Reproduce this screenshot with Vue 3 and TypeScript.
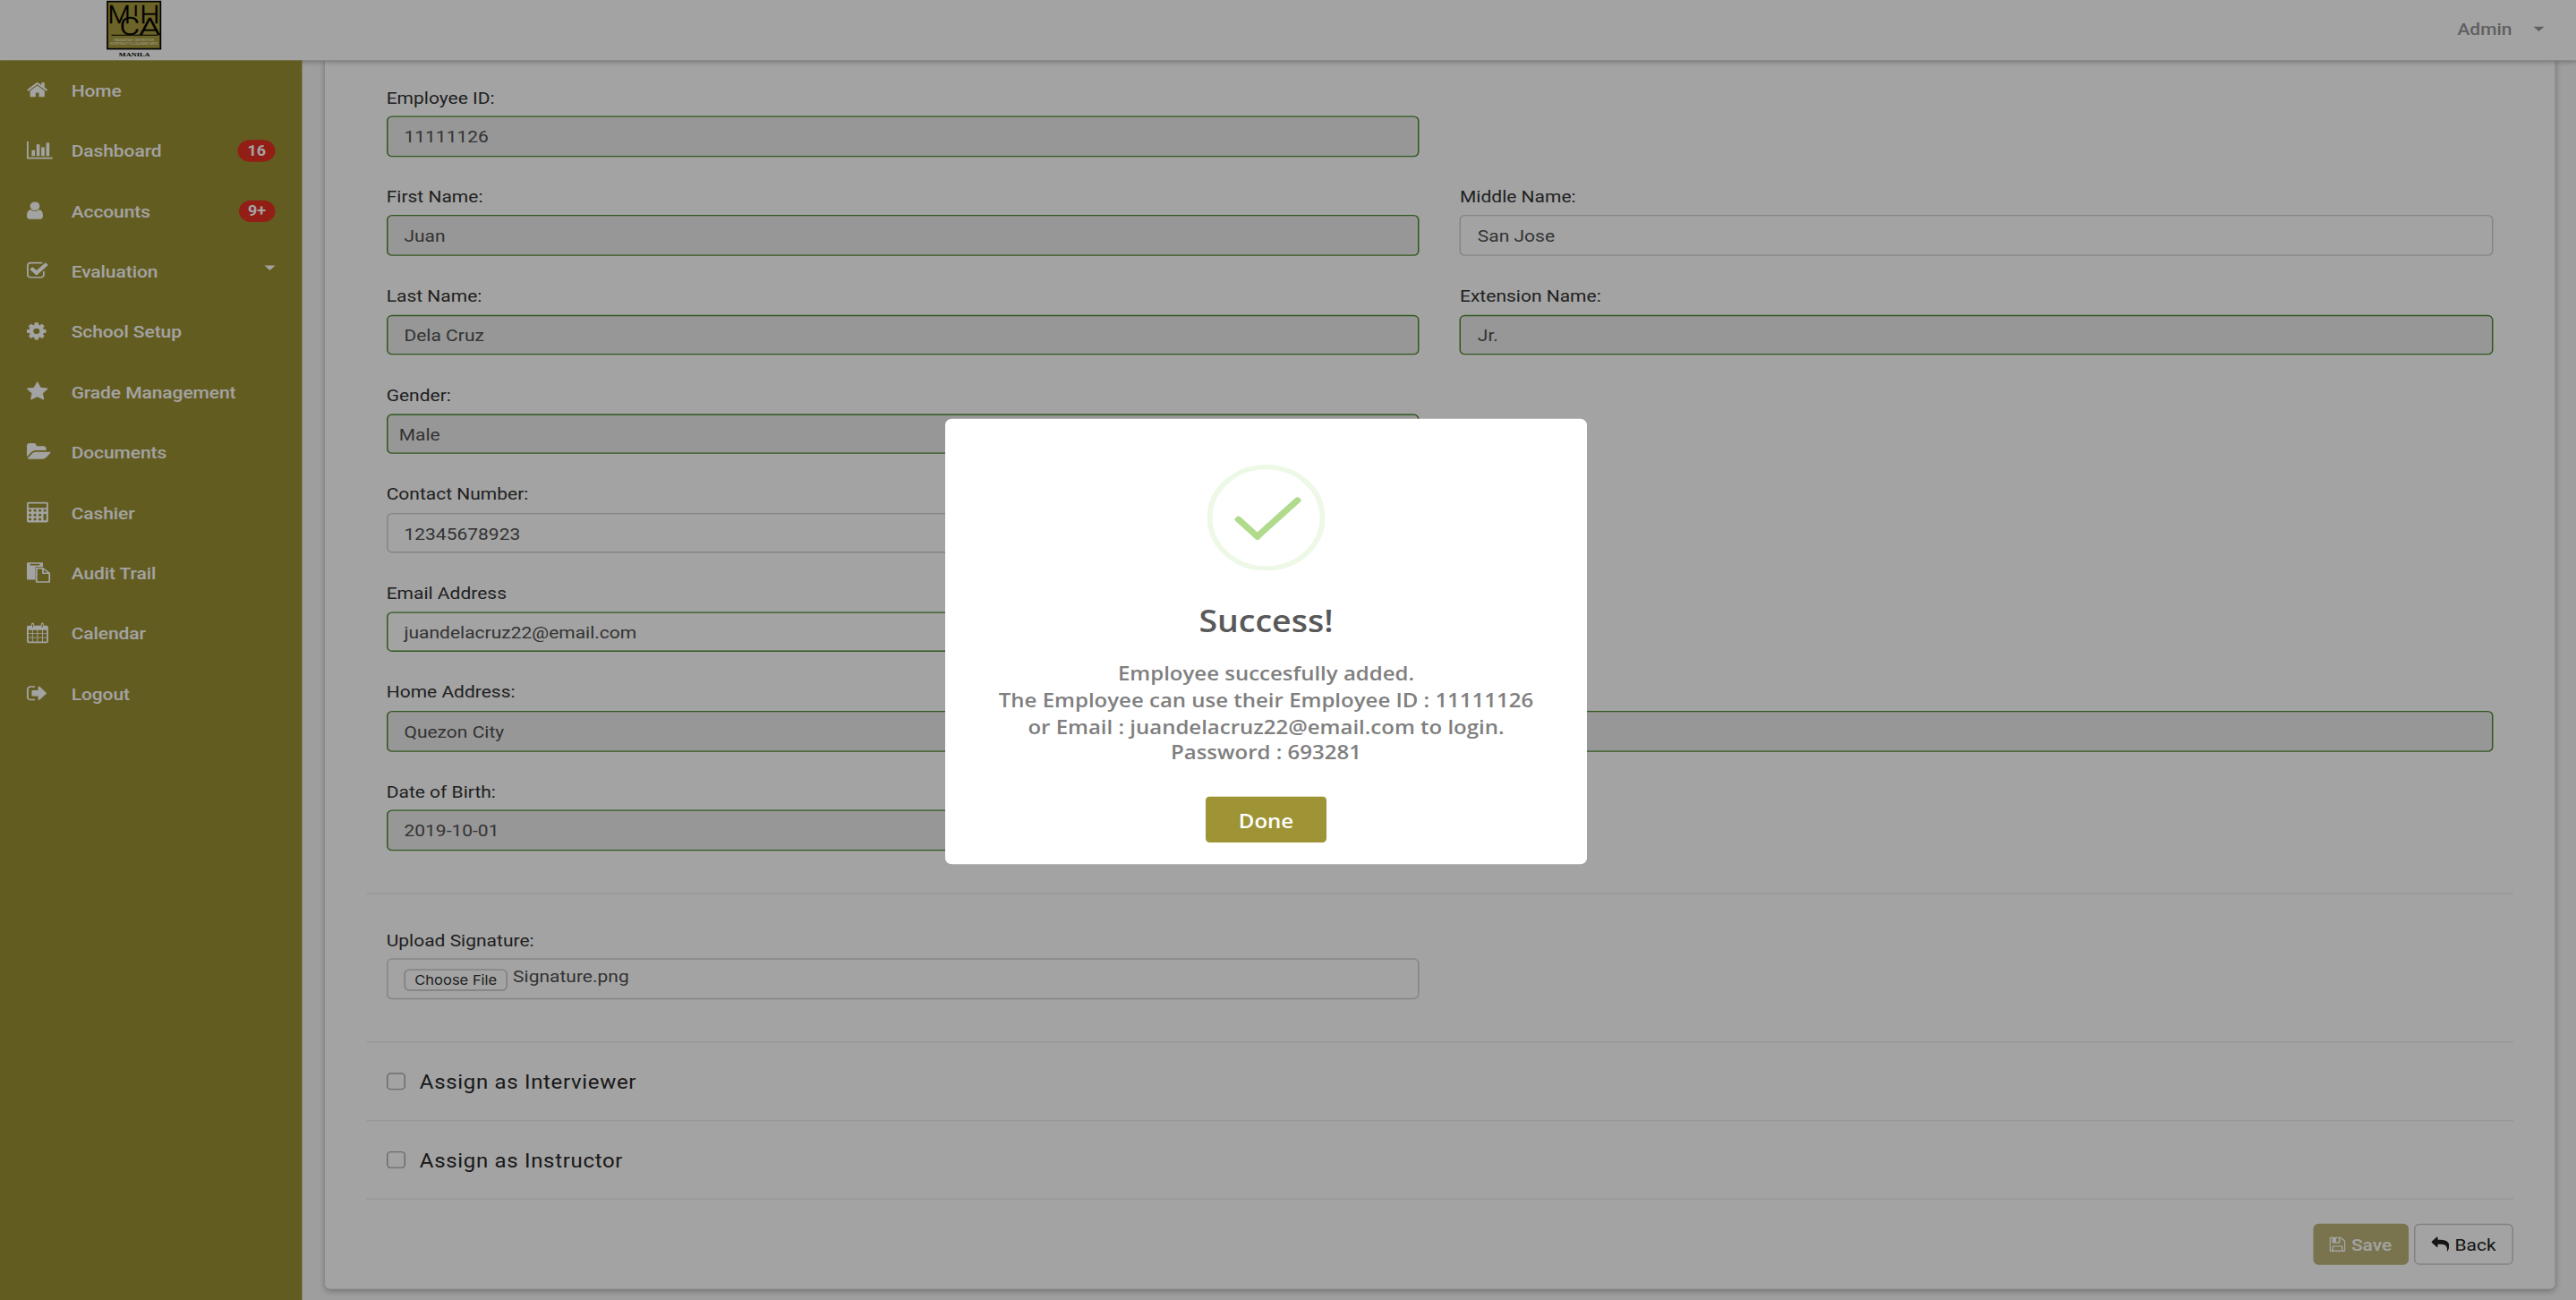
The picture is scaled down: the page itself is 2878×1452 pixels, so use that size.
<script setup lang="ts">
interface Glyph { x: number; w: number; d: string }
interface NavItem { label: string; icon: string; badge?: string; caret?: boolean }
interface Field { label: string; value: string; valid?: boolean; locked?: boolean; select?: boolean }
interface Row { fields: Field[]; full?: boolean }

const glyphs: Record<string, Glyph> = {
  home: { x: 64, w: 1664, d: 'M1472 992v480q0 26-19 45t-45 19h-384v-384h-256v384h-384q-26 0-45-19t-19-45v-480q0-1 .5-3t.5-3l575-474 575 474q1 2 1 6zm223-69l-62 74q-8 9-21 11h-3q-13 0-21-7l-692-577-692 577q-12 8-24 7-13-2-21-11l-62-74q-8-10-7-23.5t11-21.5l719-599q32-26 76-26t76 26l244 204v-195q0-14 9-23t23-9h192q14 0 23 9t9 23v408l219 182q10 8 11 21.5t-7 23.5z' },
  chart: { x: 0, w: 2048, d: 'M640 896v512h-256v-512h256zm384-512v1024h-256v-1024h256zm1024 1152v128h-2048v-1536h128v1408h1920zm-640-896v768h-256v-768h256zm384-384v1152h-256v-1152h256z' },
  user: { x: 256, w: 1280, d: 'M1536 1399q0 109-62.5 187t-150.5 78h-854q-88 0-150.5-78t-62.5-187q0-85 8.5-160.5t31.5-152 58.5-131 94-89 134.5-34.5q131 128 313 128t313-128q76 0 134.5 34.5t94 89 58.5 131 31.5 152 8.5 160.5zm-256-887q0 159-112.5 271.5t-271.5 112.5-271.5-112.5-112.5-271.5 112.5-271.5 271.5-112.5 271.5 112.5 112.5 271.5z' },
  check: { x: 64, w: 1664, d: 'M1472 930v318q0 119-84.5 203.5t-203.5 84.5h-832q-119 0-203.5-84.5t-84.5-203.5v-832q0-119 84.5-203.5t203.5-84.5h832q63 0 117 25 15 7 18 23 3 17-9 29l-49 49q-10 10-23 10-3 0-9-2-23-6-45-6h-832q-66 0-113 47t-47 113v832q0 66 47 113t113 47h832q66 0 113-47t47-113v-254q0-13 9-22l64-64q10-10 23-10 6 0 12 3 20 8 20 29zm231-489l-814 814q-24 24-57 24t-57-24l-430-430q-24-24-24-57t24-57l110-110q24-24 57-24t57 24l263 263 647-647q24-24 57-24t57 24l110 110q24 24 24 57t-24 57z' },
  cog: { x: 128, w: 1536, d: 'M1152 896q0-106-75-181t-181-75-181 75-75 181 75 181 181 75 181-75 75-181zm512-109v222q0 12-8 23t-20 13l-185 28q-19 54-39 91 35 50 107 138 10 12 10 25t-9 23q-27 37-99 108t-94 71q-12 0-26-9l-138-108q-44 23-91 38-16 136-29 186-7 28-36 28h-222q-14 0-24.5-8.5t-11.5-21.5l-28-184q-49-16-90-37l-141 107q-10 9-25 9-14 0-25-11-126-114-165-168-7-10-7-23 0-12 8-23 15-21 51-66.5t54-70.5q-27-50-41-99l-183-27q-13-2-21-12.5t-8-23.5v-222q0-12 8-23t19-13l186-28q14-46 39-92-40-57-107-138-10-12-10-24 0-10 9-23 26-36 98.5-107.5t94.5-71.5q13 0 26 10l138 107q44-23 91-38 16-136 29-186 7-28 36-28h222q14 0 24.5 8.5t11.5 21.5l28 184q49 16 90 37l142-107q9-9 24-9 13 0 25 10 129 119 165 170 7 8 7 22 0 12-8 23-15 21-51 66.5t-54 70.5q26 50 41 98l183 28q13 2 21 12.5t8 23.5z' },
  star: { x: 64, w: 1664, d: 'M1728 647q0 22-26 48l-363 354 86 500q1 7 1 20 0 21-10.5 35.5t-30.5 14.5q-19 0-40-12l-449-236-449 236q-22 12-40 12-21 0-31.5-14.5t-10.5-35.5q0-6 2-20l86-500-364-354q-25-27-25-48 0-37 56-46l502-73 225-455q19-41 49-41t49 41l225 455 502 73q56 9 56 46z' },
  folder: { x: 0, w: 1920, d: 'M1879 952q0 31-31 66l-336 396q-43 51-120.5 86.5t-143.5 35.5h-1088q-34 0-60.5-13t-26.5-43q0-31 31-66l336-396q43-51 120.5-86.5t143.5-35.5h1088q34 0 60.5 13t26.5 43zm-343-344v160h-832q-94 0-197 47.5t-164 119.5l-337 396-5 6q0-4-.5-12.5t-.5-12.5v-960q0-92 66-158t158-66h320q92 0 158 66t66 158v32h544q92 0 158 66t66 158z' },
  calculator: { x: 0, w: 1792, d: 'M128 0h1440q128 0 128 128v1536q0 128-128 128h-1440q-128 0-128-128v-1536q0-128 128-128zM168 128q-40 0-40 40v304q0 40 40 40h1360q40 0 40-40v-304q0-40-40-40zM256 640a118 118 0 1 0 .1 0zM648 640a118 118 0 1 0 .1 0zM1040 640a118 118 0 1 0 .1 0zM1432 640a118 118 0 1 0 .1 0zM256 1024a118 118 0 1 0 .1 0zM648 1024a118 118 0 1 0 .1 0zM1040 1024a118 118 0 1 0 .1 0zM256 1408a118 118 0 1 0 .1 0zM648 1408a118 118 0 1 0 .1 0zM1040 1408a118 118 0 1 0 .1 0zM1432 1024q-118 0-118 118v384q0 118 118 118t118-118v-384q0-118-118-118z' },
  paste: { x: 0, w: 1856, d: 'M64 0h1152q64 0 64 64v320h-512q-96 0-96 96v1056h-608q-64 0-64-64v-1408q0-64 64-64zM288 128q-32 0-32 32v64q0 32 32 32h704q32 0 32-32v-64q0-32-32-32zM860 448h420l576 480v800q0 64-64 64h-1024q-64 0-64-64v-1188q0-92 156-92zM832 576v1088h896v-640h-416q-96 0-96-96v-352zM1344 640v256h290z' },
  calendar: { x: 0, w: 1792, d: 'M128 256h224v-112q0-144 112-144t112 144v112h544v-112q0-144 112-144t112 144v112h224q128 0 128 128v1280q0 128-128 128h-1440q-128 0-128-128v-1280q0-128 128-128zM424 128v288h80v-288zM1192 128v288h80v-288zM128 640v288h288v-288zM480 640v288h336v-288zM880 640v288h336v-288zM1280 640v288h288v-288zM128 992v288h288v-288zM480 992v288h336v-288zM880 992v288h336v-288zM1280 992v288h288v-288zM128 1344v320h288v-320zM480 1344v320h336v-320zM880 1344v320h336v-320zM1280 1344v320h288v-320z' },
  logout: { x: 0, w: 1568, d: 'M640 1440q0 4 1 20t.5 26.5-3 23.5-10 19.5-20.5 6.5h-320q-119 0-203.5-84.5t-84.5-203.5v-704q0-119 84.5-203.5t203.5-84.5h320q13 0 22.5 9.5t9.5 22.5q0 4 1 20t.5 26.5-3 23.5-10 19.5-20.5 6.5h-320q-66 0-113 47t-47 113v704q0 66 47 113t113 47h312l11.5 1 11.5 3 8 5.5 7 9 2 13.5zm928-544q0 26-19 45l-544 544q-19 19-45 19t-45-19-19-45v-288h-448q-26 0-45-19t-19-45v-384q0-26 19-45t45-19h448v-288q0-26 19-45t45-19 45 19l544 544q19 19 19 45z' },
  save: { x: 128, w: 1536, d: 'M512 1536h768v-384h-768v384zm896 0h128v-896q0-14-10-38.5t-20-34.5l-281-281q-10-10-34-20t-39-10v416q0 40-28 68t-68 28h-576q-40 0-68-28t-28-68v-416h-128v1280h128v-416q0-40 28-68t68-28h832q40 0 68 28t28 68v416zm-384-928v-320q0-13-9.5-22.5t-22.5-9.5h-192q-13 0-22.5 9.5t-9.5 22.5v320q0 13 9.5 22.5t22.5 9.5h192q13 0 22.5-9.5t9.5-22.5zm640 32v928q0 40-28 68t-68 28h-1344q-40 0-68-28t-28-68v-1344q0-40 28-68t68-28h928q40 0 88 20t76 48l280 280q28 28 48 76t20 88z' },
  reply: { x: 0, w: 1792, d: 'M1792 1120q0 166-127 451-3 7-10.5 24t-13.5 30-13 22q-12 17-28 17-15 0-23.5-10t-8.5-25q0-9 2.5-26.5t2.5-23.5q5-68 5-123 0-101-17.5-181t-48.5-138.5-80-101-105.5-69.5-133-42.5-154-21.5-175.5-6h-224v256q0 26-19 45t-45 19-45-19l-512-512q-19-19-19-45t19-45l512-512q19-19 45-19t45 19 19 45v256h224q713 0 875 403 53 134 53 333z' },
}
const box = (n: string) => `${glyphs[n].x} 0 ${glyphs[n].w} 1792`
const iconWidth = (n: string, size: number) => (glyphs[n].w / 1792) * size

const nav: NavItem[] = [
  { label: 'Home', icon: 'home' },
  { label: 'Dashboard', icon: 'chart', badge: '16' },
  { label: 'Accounts', icon: 'user', badge: '9+' },
  { label: 'Evaluation', icon: 'check', caret: true },
  { label: 'School Setup', icon: 'cog' },
  { label: 'Grade Management', icon: 'star' },
  { label: 'Documents', icon: 'folder' },
  { label: 'Cashier', icon: 'calculator' },
  { label: 'Audit Trail', icon: 'paste' },
  { label: 'Calendar', icon: 'calendar' },
  { label: 'Logout', icon: 'logout' },
]

const rows: Row[] = [
  { fields: [{ label: 'Employee ID:', value: '11111126', valid: true, locked: true }] },
  { fields: [
    { label: 'First Name:', value: 'Juan', valid: true, locked: true },
    { label: 'Middle Name:', value: 'San Jose' },
  ] },
  { fields: [
    { label: 'Last Name:', value: 'Dela Cruz', valid: true, locked: true },
    { label: 'Extension Name:', value: 'Jr.', valid: true, locked: true },
  ] },
  { fields: [{ label: 'Gender:', value: 'Male', valid: true, locked: true, select: true }] },
  { fields: [{ label: 'Contact Number:', value: '12345678923' }] },
  { fields: [{ label: 'Email Address', value: 'juandelacruz22@email.com', valid: true }] },
  { fields: [{ label: 'Home Address:', value: 'Quezon City', valid: true, locked: true }], full: true },
  { fields: [{ label: 'Date of Birth:', value: '2019-10-01', valid: true, locked: true }] },
]

const roles = ['Assign as Interviewer', 'Assign as Instructor']
</script>

<template>
  <div class="viewport">
    <div class="page">
      <header class="topbar">
        <svg class="logo" viewBox="356 0 188 200" preserveAspectRatio="none">
          <rect x="360.500" y="5" width="178" height="159" fill="#a89b3f" stroke="#000" stroke-width="5" />
          <g font-family="Roboto, sans-serif" font-weight="300" fill="#000" stroke="#000" stroke-width="1.200">
            <text x="362" y="77" font-size="82" textLength="76" lengthAdjust="spacingAndGlyphs">M</text>
            <text x="446" y="53" font-size="50" textLength="19" lengthAdjust="spacingAndGlyphs">I</text>
            <text x="469" y="78" font-size="82" textLength="67" lengthAdjust="spacingAndGlyphs">H</text>
            <text x="401" y="116" font-size="84" textLength="68" lengthAdjust="spacingAndGlyphs">C</text>
            <text x="467" y="116" font-size="80" textLength="71" lengthAdjust="spacingAndGlyphs">A</text>
          </g>
          <path d="M374 118H530" stroke="#000" stroke-width="3" />
          <g font-family="Lato, sans-serif" font-weight="700" font-size="11" fill="#e8e4c4">
            <text x="382" y="137" textLength="134" lengthAdjust="spacingAndGlyphs">MAGSAYSAY CENTER FOR</text>
            <text x="369" y="150" textLength="160" lengthAdjust="spacingAndGlyphs">HOSPITALITY &amp; CULINARY ARTS</text>
          </g>
          <text x="399" y="189" font-family="'Liberation Serif', serif" font-weight="700" font-size="21" textLength="104" lengthAdjust="spacingAndGlyphs">MANILA</text>
        </svg>
        <div class="account">Admin<i class="caret"></i></div>
      </header>

      <div class="body">
        <nav class="sidebar">
          <a v-for="item in nav" :key="item.label" class="nav-item">
            <span class="nav-icon">
              <svg :viewBox="box(item.icon)" :style="{ width: iconWidth(item.icon, 16.8) + 'px' }">
                <path :d="glyphs[item.icon].d" fill-rule="evenodd" />
              </svg>
            </span>
            <span class="nav-label">{{ item.label }}</span>
            <span v-if="item.badge" class="badge">{{ item.badge }}</span>
            <i v-if="item.caret" class="caret"></i>
          </a>
        </nav>

        <main class="content">
          <section class="card">
            <div v-for="(row, i) in rows" :key="i" class="row">
              <div v-for="f in row.fields" :key="f.label" class="group" :class="{ full: row.full }">
                <label>{{ f.label }}</label>
                <div class="control" :class="{ valid: f.valid, locked: f.locked, select: f.select }">{{ f.value }}</div>
              </div>
            </div>
            <hr class="first" />
            <div class="row">
              <div class="group upload">
                <label>Upload Signature:</label>
                <div class="control file"><span class="choose">Choose File</span><span class="name">Signature.png</span></div>
              </div>
            </div>
            <hr />
            <template v-for="role in roles" :key="role">
              <div class="role"><span class="box"></span>{{ role }}</div>
              <hr />
            </template>
            <div class="actions">
              <span class="btn save">
                <svg :viewBox="box('save')" :style="{ width: iconWidth('save', 14) + 'px' }"><path :d="glyphs.save.d" fill-rule="evenodd" /></svg>Save
              </span>
              <span class="btn back">
                <svg :viewBox="box('reply')" :style="{ width: iconWidth('reply', 14) + 'px' }"><path :d="glyphs.reply.d" /></svg>Back
              </span>
            </div>
          </section>
        </main>
      </div>

      <div class="overlay">
        <div class="modal">
          <svg class="success" viewBox="-4 -4 88 88">
            <circle cx="40" cy="40" r="42" fill="none" stroke="#a5dc86" stroke-opacity=".2" stroke-width="4" />
            <g fill="#b0db8c">
              <rect x="14" y="46" width="25" height="5" rx="2" transform="rotate(45 26.500 48.500)" />
              <rect x="25" y="38" width="47" height="5" rx="2" transform="rotate(-45 48.500 40.500)" />
            </g>
          </svg>
          <h2>Success!</h2>
          <p>
            Employee succesfully added.<br />
            The Employee can use their Employee ID : 11111126<br />
            or Email : juandelacruz22@email.com to login.<br />
            Password : 693281
          </p>
          <button type="button">Done</button>
        </div>
      </div>
    </div>
  </div>
</template>

<style>
body {
  margin: 0;
  overflow: hidden;
}
</style>

<style scoped>
.viewport {
  width: 2878px;
  height: 1452px;
  overflow: hidden;
}
.page {
  position: relative;
  width: 1920px;
  height: 1080px;
  transform: scale(1.5, 1.348);
  transform-origin: 0 0;
  display: flex;
  flex-direction: column;
  background: #f8f8f8;
  font-family: Roboto, sans-serif;
  font-size: 14px;
  color: #333;
}
.page * {
  box-sizing: border-box;
}
.topbar {
  flex: none;
  height: 50px;
  display: flex;
  justify-content: space-between;
  align-items: center;
  padding: 0 25px 0 79px;
  background: #fff;
  box-shadow: 0 1px 4px rgba(0, 0, 0, 0.3);
  z-index: 1;
}
.logo {
  width: 41.8px;
  height: 49.4px;
  align-self: flex-start;
}
.account {
  display: flex;
  align-items: center;
  gap: 16px;
  color: #979797;
  font-weight: 500;
  margin-top: -1.6px;
}
.caret {
  border: 4px solid transparent;
  border-top: 4.5px solid currentColor;
  border-bottom: 0;
}
.body {
  flex: 1;
  min-height: 0;
  display: flex;
}
.sidebar {
  width: 225px;
  background: #9b9032;
  z-index: 2;
}
.nav-item {
  height: 50px;
  padding: 0 20px;
  display: flex;
  align-items: center;
  color: #fff;
  font-weight: 500;
  letter-spacing: -0.05px;
}
.nav-icon {
  width: 33.1px;
  display: flex;
  margin-top: -1.2px;
}
.nav-icon svg {
  height: 16.8px;
  fill: #fff;
  overflow: visible;
}
.nav-label {
  flex: 1;
  padding-top: 0.6px;
}
.badge {
  height: 18px;
  line-height: 18.8px;
  padding: 0 7px;
  border-radius: 9px;
  background: #e52f22;
  font-size: 12px;
  font-weight: 700;
}
.nav-item .caret {
  margin-top: -5.5px;
}
.content {
  flex: 1;
  padding: 0 16.7px 11.8px 16.8px;
}
.card {
  height: 100%;
  padding: 21px 31.2px 0;
  background: #fff;
  border-radius: 0 0 4px 4px;
  box-shadow: 0 1px 5px rgba(0, 0, 0, 0.3);
}
.row {
  display: flex;
}
.group {
  width: 50%;
  height: 82.09px;
  padding: 0 15.3px 0 14.8px;
}
.group.full {
  width: 100%;
}
label {
  display: block;
  height: 20.4px;
  line-height: 20.4px;
  margin-bottom: 5px;
}
.control {
  height: 33.7px;
  line-height: 33.6px;
  padding: 0 12.2px;
  border: 1px solid #d0d0d0;
  border-radius: 4px;
  color: #505050;
  font-weight: 400;
}
.control.valid {
  border-color: #4c8a2f;
}
.control.locked {
  background: #ededed;
}
.control.select {
  padding: 0 8.4px;
  line-height: 32px;
}
hr {
  height: 1px;
  margin: 0;
  border: 0;
  background: #ececec;
}
hr.first {
  margin-top: 12px;
}
.upload {
  height: 122.6px;
  padding-top: 28px;
}
.file {
  display: flex;
  gap: 4px;
  line-height: 31.7px;
}
.choose {
  margin-top: 7.6px;
  width: 77.1px;
  height: 18.1px;
  line-height: 16.5px;
  text-align: center;
  border: 1px solid #c4c4c4;
  border-radius: 4px;
  font-family: Inter, sans-serif;
  font-size: 11px;
  color: #333;
}
.name {
  margin-top: -1.5px;
}
.role {
  height: 64px;
  padding-left: 14.8px;
  display: flex;
  align-items: center;
  font-size: 16px;
  letter-spacing: 0.45px;
  font-weight: 400;
  color: #282828;
}
.box {
  width: 14px;
  height: 14px;
  margin-right: 10.8px;
  border: 1px solid #a8a8a8;
  border-radius: 3px;
}
.actions {
  display: flex;
  justify-content: flex-end;
  gap: 4.2px;
  padding-top: 19.7px;
}
.btn {
  display: flex;
  align-items: center;
  gap: 4px;
  height: 34px;
  padding: 0 12px;
  border-radius: 4px;
  font-weight: 500;
}
.btn svg {
  height: 14px;
  fill: currentColor;
}
.save {
  width: 70.7px;
  background: #9b9032;
  color: #fff;
  opacity: 0.65;
}
.back {
  width: 74px;
  border: 1px solid #ccc;
  font-weight: 400;
  color: #222;
}
.overlay {
  position: absolute;
  inset: 0;
  z-index: 5;
  background: rgba(0, 0, 0, 0.36);
  padding: 347.4px 0 0 704px;
}
.modal {
  width: 478px;
  height: 368.5px;
  padding-top: 37.6px;
  display: flex;
  flex-direction: column;
  align-items: center;
  background: #fff;
  border-radius: 5px;
  font-family: 'Open Sans', sans-serif;
  text-align: center;
}
.success {
  flex: none;
  width: 88px;
  height: 88px;
}
h2 {
  margin: 22.6px 0 0;
  height: 36px;
  line-height: 36px;
  font-size: 25px;
  font-weight: 600;
  color: #595959;
}
p {
  margin: 16.2px 0 0;
  line-height: 21.9px;
  font-size: 16px;
  font-weight: 600;
  color: #7f7f7f;
}
button {
  margin-top: 25px;
  width: 90.2px;
  height: 38.1px;
  padding: 1px 0 0;
  border: 0;
  border-radius: 3px;
  background: #9e9436;
  color: #fff;
  font: 600 16px 'Open Sans', sans-serif;
}
</style>
